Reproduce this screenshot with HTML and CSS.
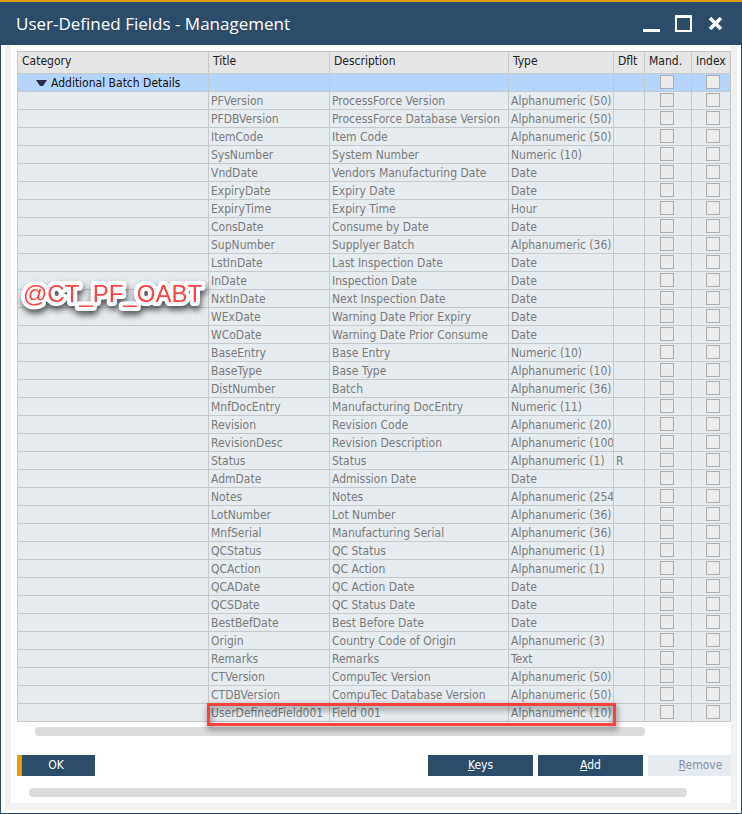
FILE: index.html
```html
<!DOCTYPE html>
<html lang="en">
<head>
<meta charset="utf-8">
<title>User-Defined Fields - Management</title>
<link rel="stylesheet" href="styles.css">
</head>
<body>
<div class="window">
<header class="titlebar">
<h1>User-Defined Fields - Management</h1>
<div class="window-controls">
<button type="button" aria-label="Minimize"><svg width="18" height="18" viewBox="0 0 18 18"><path d="M0 14H17V17H0Z" fill="#fff"/></svg></button>
<button type="button" aria-label="Maximize"><svg width="18" height="18" viewBox="0 0 18 18"><path d="M0 0H17V17H0ZM2 3V15H15V3Z" fill="#fff" fill-rule="evenodd"/></svg></button>
<button type="button" aria-label="Close"><svg width="18" height="18" viewBox="0 0 18 18"><path d="M3 3L14 14M14 3L3 14" stroke="#fff" stroke-width="3.600"/></svg></button>
</div>
</header>
<main class="frame">
<div class="content">
<div class="grid-area">
<table class="fields">
<colgroup><col class="c-category"><col class="c-title"><col><col class="c-type"><col class="c-default"><col class="c-mandatory"><col class="c-index"></colgroup>
<thead>
<tr><th>Category</th><th>Title</th><th>Description</th><th>Type</th><th>Dflt</th><th>Mand.</th><th>Index</th></tr>
</thead>
<tbody>
<tr class="group"><td><svg class="arrow" width="11" height="6" viewBox="0 0 11 6"><path d="M0 0H11L7 6H4Z" fill="#2b2b4b"/></svg>Additional Batch Details</td><td></td><td></td><td></td><td></td><td><input type="checkbox" aria-label="Mandatory"></td><td><input type="checkbox" aria-label="Index"></td></tr>
<tr><td></td><td>PFVersion</td><td>ProcessForce Version</td><td>Alphanumeric (50)</td><td></td><td><input type="checkbox" aria-label="Mandatory"></td><td><input type="checkbox" aria-label="Index"></td></tr>
<tr><td></td><td>PFDBVersion</td><td>ProcessForce Database Version</td><td>Alphanumeric (50)</td><td></td><td><input type="checkbox" aria-label="Mandatory"></td><td><input type="checkbox" aria-label="Index"></td></tr>
<tr><td></td><td>ItemCode</td><td>Item Code</td><td>Alphanumeric (50)</td><td></td><td><input type="checkbox" aria-label="Mandatory"></td><td><input type="checkbox" aria-label="Index"></td></tr>
<tr><td></td><td>SysNumber</td><td>System Number</td><td>Numeric (10)</td><td></td><td><input type="checkbox" aria-label="Mandatory"></td><td><input type="checkbox" aria-label="Index"></td></tr>
<tr><td></td><td>VndDate</td><td>Vendors Manufacturing Date</td><td>Date</td><td></td><td><input type="checkbox" aria-label="Mandatory"></td><td><input type="checkbox" aria-label="Index"></td></tr>
<tr><td></td><td>ExpiryDate</td><td>Expiry Date</td><td>Date</td><td></td><td><input type="checkbox" aria-label="Mandatory"></td><td><input type="checkbox" aria-label="Index"></td></tr>
<tr><td></td><td>ExpiryTime</td><td>Expiry Time</td><td>Hour</td><td></td><td><input type="checkbox" aria-label="Mandatory"></td><td><input type="checkbox" aria-label="Index"></td></tr>
<tr><td></td><td>ConsDate</td><td>Consume by Date</td><td>Date</td><td></td><td><input type="checkbox" aria-label="Mandatory"></td><td><input type="checkbox" aria-label="Index"></td></tr>
<tr><td></td><td>SupNumber</td><td>Supplyer Batch</td><td>Alphanumeric (36)</td><td></td><td><input type="checkbox" aria-label="Mandatory"></td><td><input type="checkbox" aria-label="Index"></td></tr>
<tr><td></td><td>LstInDate</td><td>Last Inspection Date</td><td>Date</td><td></td><td><input type="checkbox" aria-label="Mandatory"></td><td><input type="checkbox" aria-label="Index"></td></tr>
<tr><td></td><td>InDate</td><td>Inspection Date</td><td>Date</td><td></td><td><input type="checkbox" aria-label="Mandatory"></td><td><input type="checkbox" aria-label="Index"></td></tr>
<tr><td></td><td>NxtInDate</td><td>Next Inspection Date</td><td>Date</td><td></td><td><input type="checkbox" aria-label="Mandatory"></td><td><input type="checkbox" aria-label="Index"></td></tr>
<tr><td></td><td>WExDate</td><td>Warning Date Prior Expiry</td><td>Date</td><td></td><td><input type="checkbox" aria-label="Mandatory"></td><td><input type="checkbox" aria-label="Index"></td></tr>
<tr><td></td><td>WCoDate</td><td>Warning Date Prior Consume</td><td>Date</td><td></td><td><input type="checkbox" aria-label="Mandatory"></td><td><input type="checkbox" aria-label="Index"></td></tr>
<tr><td></td><td>BaseEntry</td><td>Base Entry</td><td>Numeric (10)</td><td></td><td><input type="checkbox" aria-label="Mandatory"></td><td><input type="checkbox" aria-label="Index"></td></tr>
<tr><td></td><td>BaseType</td><td>Base Type</td><td>Alphanumeric (10)</td><td></td><td><input type="checkbox" aria-label="Mandatory"></td><td><input type="checkbox" aria-label="Index"></td></tr>
<tr><td></td><td>DistNumber</td><td>Batch</td><td>Alphanumeric (36)</td><td></td><td><input type="checkbox" aria-label="Mandatory"></td><td><input type="checkbox" aria-label="Index"></td></tr>
<tr><td></td><td>MnfDocEntry</td><td>Manufacturing DocEntry</td><td>Numeric (11)</td><td></td><td><input type="checkbox" aria-label="Mandatory"></td><td><input type="checkbox" aria-label="Index"></td></tr>
<tr><td></td><td>Revision</td><td>Revision Code</td><td>Alphanumeric (20)</td><td></td><td><input type="checkbox" aria-label="Mandatory"></td><td><input type="checkbox" aria-label="Index"></td></tr>
<tr><td></td><td>RevisionDesc</td><td>Revision Description</td><td>Alphanumeric (100</td><td></td><td><input type="checkbox" aria-label="Mandatory"></td><td><input type="checkbox" aria-label="Index"></td></tr>
<tr><td></td><td>Status</td><td>Status</td><td>Alphanumeric (1)</td><td>R</td><td><input type="checkbox" aria-label="Mandatory"></td><td><input type="checkbox" aria-label="Index"></td></tr>
<tr><td></td><td>AdmDate</td><td>Admission Date</td><td>Date</td><td></td><td><input type="checkbox" aria-label="Mandatory"></td><td><input type="checkbox" aria-label="Index"></td></tr>
<tr><td></td><td>Notes</td><td>Notes</td><td>Alphanumeric (254</td><td></td><td><input type="checkbox" aria-label="Mandatory"></td><td><input type="checkbox" aria-label="Index"></td></tr>
<tr><td></td><td>LotNumber</td><td>Lot Number</td><td>Alphanumeric (36)</td><td></td><td><input type="checkbox" aria-label="Mandatory"></td><td><input type="checkbox" aria-label="Index"></td></tr>
<tr><td></td><td>MnfSerial</td><td>Manufacturing Serial</td><td>Alphanumeric (36)</td><td></td><td><input type="checkbox" aria-label="Mandatory"></td><td><input type="checkbox" aria-label="Index"></td></tr>
<tr><td></td><td>QCStatus</td><td>QC Status</td><td>Alphanumeric (1)</td><td></td><td><input type="checkbox" aria-label="Mandatory"></td><td><input type="checkbox" aria-label="Index"></td></tr>
<tr><td></td><td>QCAction</td><td>QC Action</td><td>Alphanumeric (1)</td><td></td><td><input type="checkbox" aria-label="Mandatory"></td><td><input type="checkbox" aria-label="Index"></td></tr>
<tr><td></td><td>QCADate</td><td>QC Action Date</td><td>Date</td><td></td><td><input type="checkbox" aria-label="Mandatory"></td><td><input type="checkbox" aria-label="Index"></td></tr>
<tr><td></td><td>QCSDate</td><td>QC Status Date</td><td>Date</td><td></td><td><input type="checkbox" aria-label="Mandatory"></td><td><input type="checkbox" aria-label="Index"></td></tr>
<tr><td></td><td>BestBefDate</td><td>Best Before Date</td><td>Date</td><td></td><td><input type="checkbox" aria-label="Mandatory"></td><td><input type="checkbox" aria-label="Index"></td></tr>
<tr><td></td><td>Origin</td><td>Country Code of Origin</td><td>Alphanumeric (3)</td><td></td><td><input type="checkbox" aria-label="Mandatory"></td><td><input type="checkbox" aria-label="Index"></td></tr>
<tr><td></td><td>Remarks</td><td>Remarks</td><td>Text</td><td></td><td><input type="checkbox" aria-label="Mandatory"></td><td><input type="checkbox" aria-label="Index"></td></tr>
<tr><td></td><td>CTVersion</td><td>CompuTec Version</td><td>Alphanumeric (50)</td><td></td><td><input type="checkbox" aria-label="Mandatory"></td><td><input type="checkbox" aria-label="Index"></td></tr>
<tr><td></td><td>CTDBVersion</td><td>CompuTec Database Version</td><td>Alphanumeric (50)</td><td></td><td><input type="checkbox" aria-label="Mandatory"></td><td><input type="checkbox" aria-label="Index"></td></tr>
<tr class="marked"><td></td><td>UserDefinedField001<span class="marker"></span></td><td>Field 001</td><td>Alphanumeric (10)</td><td></td><td><input type="checkbox" aria-label="Mandatory"></td><td><input type="checkbox" aria-label="Index"></td></tr>
</tbody>
</table>
<svg class="callout" width="196" height="44" viewBox="0 0 196 44"><text x="6" y="28">@CT_PF_OABT</text></svg>
</div>
<div class="scrollbar grid-scroll"></div>
<div class="actions">
<button type="button" class="btn ok">OK</button>
<button type="button" class="btn keys"><u>K</u>eys</button>
<button type="button" class="btn"><u>A</u>dd</button>
<button type="button" class="btn remove" disabled><u>R</u>emove</button>
</div>
<div class="scrollbar page-scroll"></div>
</div>
</main>
</div>
</body>
</html>
```
FILE: styles.css
```css
* { box-sizing: border-box; }

body {
  margin: 0;
  background: #fff;
  color: #222;
  font: 12px/16px "DejaVu Sans Condensed", "DejaVu Sans", sans-serif;
}

.window {
  min-height: 100vh;
  border: 1px solid #2c4c6a;
  border-top: 0;
}

.titlebar {
  display: flex;
  align-items: center;
  justify-content: space-between;
  height: 45px;
  margin: 0 -1px;
  padding: 0 17px 0 16px;
  border-top: 2px solid #e0a000;
  background: #2c4c6a;
  color: #fff;
}

h1 {
  margin: 0;
  font: 400 17px/24px "Open Sans", "Noto Sans", sans-serif;
}

.window-controls { display: flex; gap: 14px; }

.window-controls button {
  display: block;
  height: 18px;
  padding: 0;
  border: 0;
  background: none;
}

.window-controls svg { display: block; }

.frame {
  margin: 0 4px 3px;
  border: solid #f1f1f1;
  border-width: 0 6px 7px;
}

.content {
  padding: 6px 0 6px 6px;
  overflow: hidden;
}

.grid-area { position: relative; }

.fields {
  width: 100%;
  table-layout: fixed;
  border-collapse: separate;
  border-spacing: 0;
  border: solid #c6c9cb;
  border-width: 1px 0 0 1px;
}

.c-category { width: 191px; }
.c-title { width: 121px; }
.c-type { width: 105px; }
.c-default { width: 31px; }
.c-mandatory { width: 47px; }
.c-index { width: 39px; }

th, td {
  padding: 0 0 0 2px;
  border: solid #c6c9cb;
  border-width: 0 1px 1px 0;
  overflow: hidden;
  text-align: left;
  white-space: nowrap;
}

th {
  height: 22px;
  padding: 0 0 3px 4px;
  background: #e5e5e5;
  color: #222;
  font-weight: 400;
}

td {
  height: 18px;
  background: #e6ebef;
  color: #7b7b7b;
}

.group td { background: #b4d4fc; color: #111; }

.arrow { margin: 0 4px 1px 16px; }

td:nth-child(6) { padding: 0 2px 2px 0; }
td:nth-child(7) { padding: 0 0 2px 4px; }

input {
  display: block;
  appearance: none;
  width: 14px;
  height: 14px;
  margin: 0 auto;
  border: 1px solid #adadad;
  background: #ebebeb;
}

.marked { position: relative; }

.marker {
  position: absolute;
  inset: -1px 115px -4px 189px;
  border: 3px solid #fa4040;
  filter: drop-shadow(1px 3px 3px rgb(0 0 0 / 60%));
}

.callout {
  position: absolute;
  top: 223px;
  left: 0;
  overflow: visible;
  fill: #fb4444;
  stroke: #fff;
  stroke-width: 8px;
  stroke-linejoin: round;
  paint-order: stroke;
  font: 24px/28px "Liberation Sans", sans-serif;
  filter: drop-shadow(1px 4px 3px rgb(0 0 0 / 65%));
}

.scrollbar {
  height: 9px;
  border-radius: 4px;
  background: #dcdcdc;
}

.grid-scroll { margin: 5px 86px 19px 18px; }
.page-scroll { margin: 12px 44px 0 12px; }

.actions { display: flex; gap: 5px; margin-right: -22px; }

.btn {
  width: 105px;
  height: 21px;
  padding: 0 0 2px;
  border: 0;
  background: #2c4c6a;
  color: #fff;
  font: inherit;
}

.ok { width: 78px; padding-right: 5px; border-left: 5px solid #e0a000; }
.keys { margin-left: auto; }
.remove { background: #e6ebef; color: #8490ac; }
```
